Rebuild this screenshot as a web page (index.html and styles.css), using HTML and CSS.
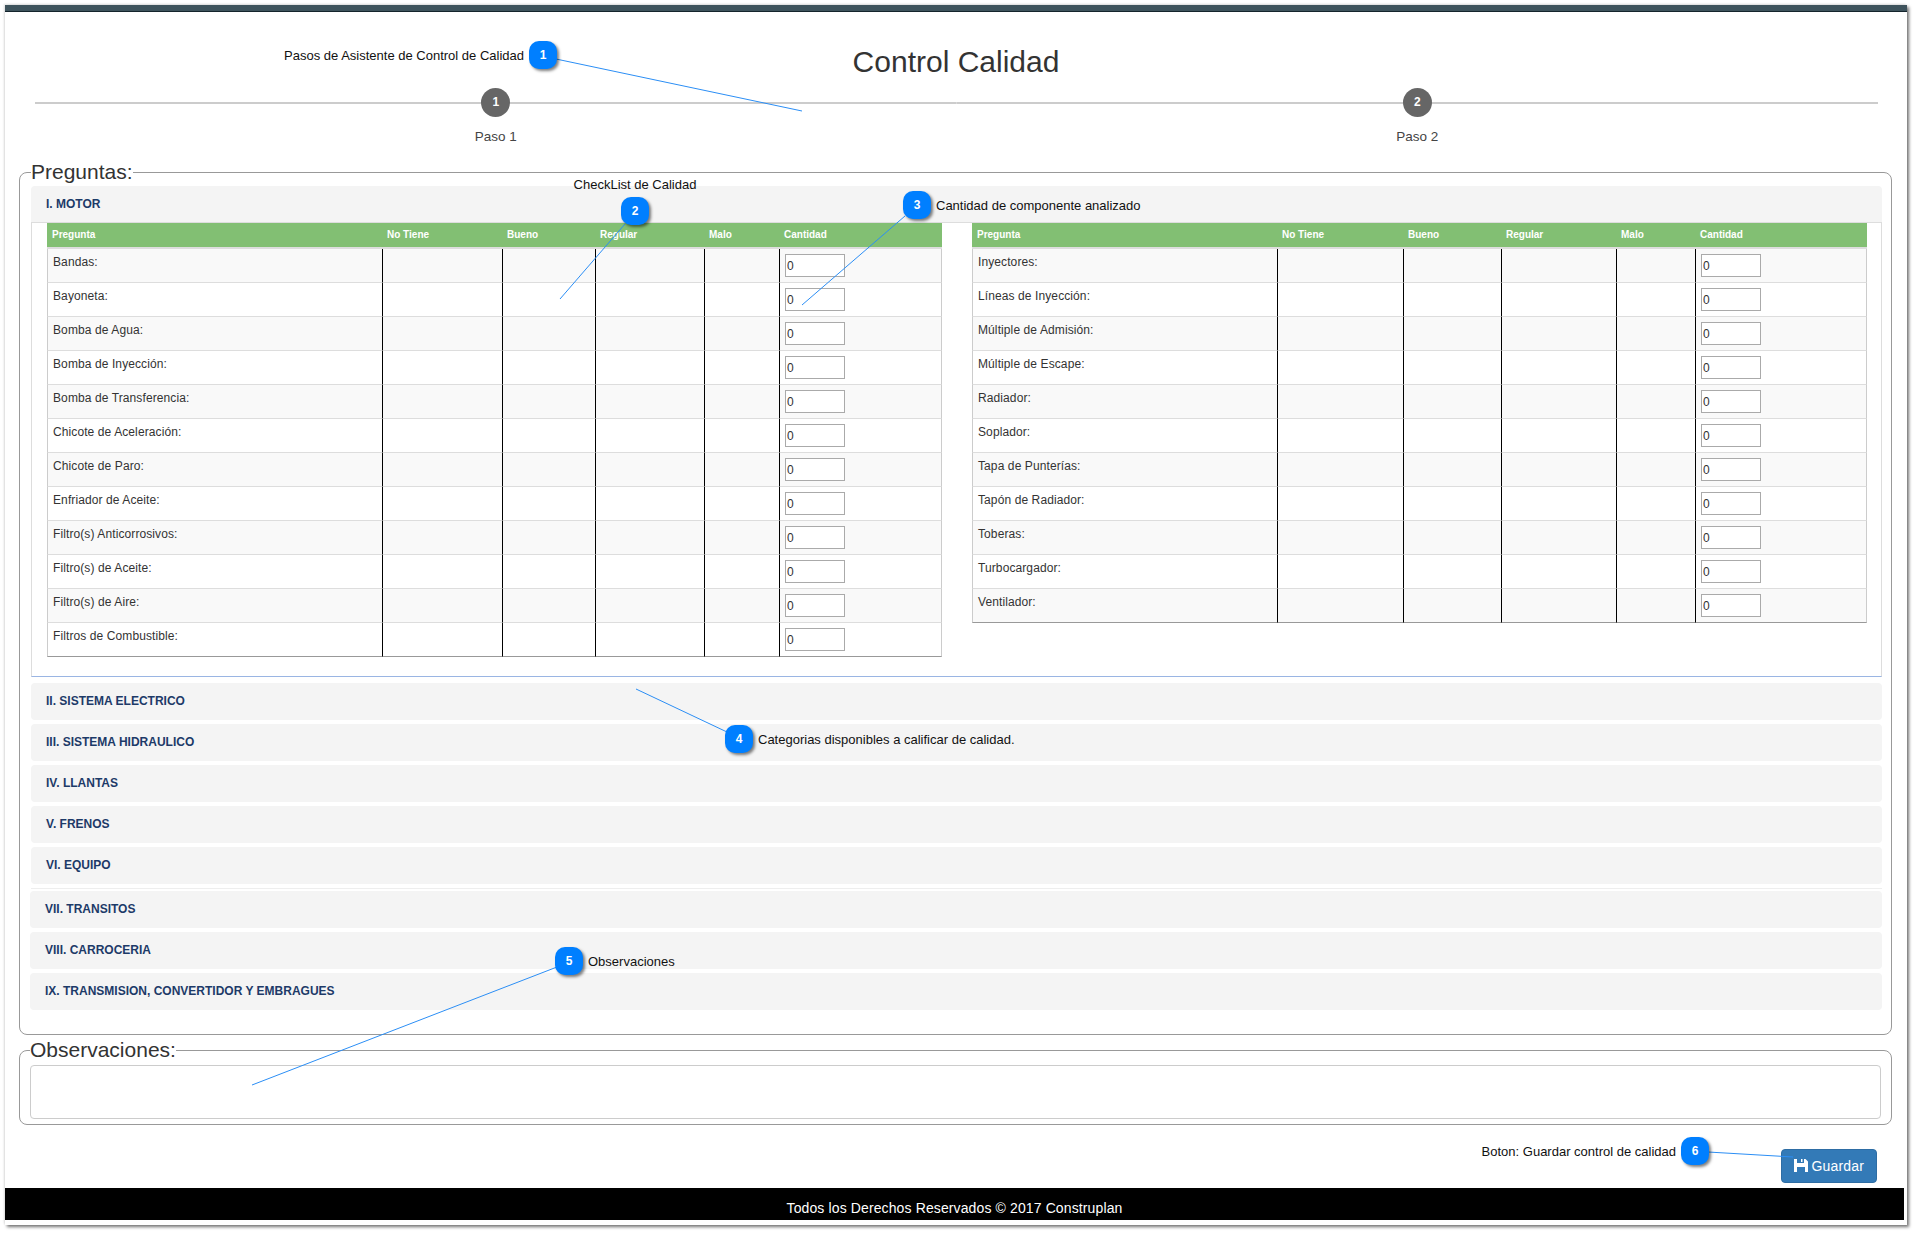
FILE: index.html
```html
<!DOCTYPE html>
<html lang="es">
<head>
    <meta charset="UTF-8">
    <meta name="viewport" content="width=device-width, initial-scale=1.0">
    <title>Control Calidad</title>
    <link rel="stylesheet" href="styles.css">
</head>
<body>

<div class="window">
    <div class="top-bar"></div>

    <h1 class="page-title">Control Calidad</h1>

    <!-- Wizard steps -->
    <div class="steps">
        <div class="step-track"><span class="step-circle">1</span></div>
        <div class="step-track"><span class="step-circle">2</span></div>
        <div class="step-label">Paso 1</div>
        <div class="step-label">Paso 2</div>
    </div>

    <fieldset class="group">
        <legend>Preguntas:</legend>

        <div class="accordion first-group">
            <div class="acc-title open">I. MOTOR</div>
            <div class="acc-panel">
                <table class="check left-table">
                    <colgroup>
                        <col class="l1"><col class="l2"><col class="l3"><col class="l4"><col class="l5"><col class="l6">
                    </colgroup>
                    <thead>
                        <tr><th>Pregunta</th><th>No Tiene</th><th>Bueno</th><th>Regular</th><th>Malo</th><th>Cantidad</th></tr>
                    </thead>
                    <tbody>
                        <tr><td>Bandas:</td><td></td><td></td><td></td><td></td><td><input class="qty" value="0"></td></tr>
                        <tr><td>Bayoneta:</td><td></td><td></td><td></td><td></td><td><input class="qty" value="0"></td></tr>
                        <tr><td>Bomba de Agua:</td><td></td><td></td><td></td><td></td><td><input class="qty" value="0"></td></tr>
                        <tr><td>Bomba de Inyección:</td><td></td><td></td><td></td><td></td><td><input class="qty" value="0"></td></tr>
                        <tr><td>Bomba de Transferencia:</td><td></td><td></td><td></td><td></td><td><input class="qty" value="0"></td></tr>
                        <tr><td>Chicote de Aceleración:</td><td></td><td></td><td></td><td></td><td><input class="qty" value="0"></td></tr>
                        <tr><td>Chicote de Paro:</td><td></td><td></td><td></td><td></td><td><input class="qty" value="0"></td></tr>
                        <tr><td>Enfriador de Aceite:</td><td></td><td></td><td></td><td></td><td><input class="qty" value="0"></td></tr>
                        <tr><td>Filtro(s) Anticorrosivos:</td><td></td><td></td><td></td><td></td><td><input class="qty" value="0"></td></tr>
                        <tr><td>Filtro(s) de Aceite:</td><td></td><td></td><td></td><td></td><td><input class="qty" value="0"></td></tr>
                        <tr><td>Filtro(s) de Aire:</td><td></td><td></td><td></td><td></td><td><input class="qty" value="0"></td></tr>
                        <tr><td>Filtros de Combustible:</td><td></td><td></td><td></td><td></td><td><input class="qty" value="0"></td></tr>
                    </tbody>
                </table>

                <table class="check right-table">
                    <colgroup>
                        <col class="r1"><col class="r2"><col class="r3"><col class="r4"><col class="r5"><col class="r6">
                    </colgroup>
                    <thead>
                        <tr><th>Pregunta</th><th>No Tiene</th><th>Bueno</th><th>Regular</th><th>Malo</th><th>Cantidad</th></tr>
                    </thead>
                    <tbody>
                        <tr><td>Inyectores:</td><td></td><td></td><td></td><td></td><td><input class="qty" value="0"></td></tr>
                        <tr><td>Líneas de Inyección:</td><td></td><td></td><td></td><td></td><td><input class="qty" value="0"></td></tr>
                        <tr><td>Múltiple de Admisión:</td><td></td><td></td><td></td><td></td><td><input class="qty" value="0"></td></tr>
                        <tr><td>Múltiple de Escape:</td><td></td><td></td><td></td><td></td><td><input class="qty" value="0"></td></tr>
                        <tr><td>Radiador:</td><td></td><td></td><td></td><td></td><td><input class="qty" value="0"></td></tr>
                        <tr><td>Soplador:</td><td></td><td></td><td></td><td></td><td><input class="qty" value="0"></td></tr>
                        <tr><td>Tapa de Punterías:</td><td></td><td></td><td></td><td></td><td><input class="qty" value="0"></td></tr>
                        <tr><td>Tapón de Radiador:</td><td></td><td></td><td></td><td></td><td><input class="qty" value="0"></td></tr>
                        <tr><td>Toberas:</td><td></td><td></td><td></td><td></td><td><input class="qty" value="0"></td></tr>
                        <tr><td>Turbocargador:</td><td></td><td></td><td></td><td></td><td><input class="qty" value="0"></td></tr>
                        <tr><td>Ventilador:</td><td></td><td></td><td></td><td></td><td><input class="qty" value="0"></td></tr>
                    </tbody>
                </table>
            </div>
            <div class="acc-title">II. SISTEMA ELECTRICO</div>
            <div class="acc-title">III. SISTEMA HIDRAULICO</div>
            <div class="acc-title">IV. LLANTAS</div>
            <div class="acc-title">V. FRENOS</div>
            <div class="acc-title">VI. EQUIPO</div>
        </div>

        <div class="accordion second-group">
            <div class="acc-title">VII. TRANSITOS</div>
            <div class="acc-title">VIII. CARROCERIA</div>
            <div class="acc-title">IX. TRANSMISION, CONVERTIDOR Y EMBRAGUES</div>
        </div>
    </fieldset>

    <fieldset class="group notes">
        <legend>Observaciones:</legend>
        <textarea class="notes-box"></textarea>
    </fieldset>

    <div class="actions">
        <button class="btn-save">
            <svg class="save-icon" viewBox="0 0 14 14" width="14" height="14">
                <path fill="#fff" fill-rule="evenodd" d="M0 1h11.5L14 3.5V14H0zM3 1v4h7V1H8.5v3H7V1zM3 9v5h8V9z"/>
            </svg>
            Guardar
        </button>
    </div>

    <div class="footer">Todos los Derechos Reservados © 2017 Construplan</div>
</div>

<!-- Callouts drawn over the page -->
<svg class="leaders" width="1916" height="1234" viewBox="0 0 1916 1234">
    <line x1="556" y1="59" x2="802" y2="111"/>
    <line x1="625" y1="224" x2="560" y2="299"/>
    <line x1="905" y1="216" x2="802" y2="305"/>
    <line x1="727" y1="732" x2="636" y2="689"/>
    <line x1="557" y1="967" x2="252" y2="1085"/>
    <line x1="1708" y1="1152" x2="1793" y2="1157"/>
</svg>

<div class="note note-1"><span>Pasos de Asistente de Control de Calidad</span><b class="badge">1</b></div>
<div class="note note-2"><span>CheckList de Calidad</span><b class="badge">2</b></div>
<div class="note note-3"><b class="badge">3</b><span>Cantidad de componente analizado</span></div>
<div class="note note-4"><b class="badge">4</b><span>Categorias disponibles a calificar de calidad.</span></div>
<div class="note note-5"><b class="badge">5</b><span>Observaciones</span></div>
<div class="note note-6"><span>Boton: Guardar control de calidad</span><b class="badge">6</b></div>

</body>
</html>
```

FILE: styles.css
```css
* {
    box-sizing: border-box;
}

html, body {
    margin: 0;
    background-color: #fff;
}

body {
    padding: 5px 9px 9px 5px;
    font-family: "Liberation Sans", Arial, sans-serif;
    font-size: 12px;
    color: #333;
}

.window {
    width: 1902px;
    padding-bottom: 5px;
    background-color: #fff;
    box-shadow: 2px 2px 3px rgba(0, 0, 0, 0.55), -1px -1px 2px rgba(0, 0, 0, 0.12);
}

.top-bar {
    height: 7px;
    background-color: #3e535c;
    border-bottom: 1px solid #14242c;
}

.page-title {
    margin: 33px 0 0;
    font-size: 30px;
    font-weight: 400;
    line-height: 33px;
    text-align: center;
}

/* Wizard */
.steps {
    display: grid;
    grid-template-columns: 1fr 1fr;
    margin: 10px 29px 0 30px;
    text-align: center;
}

.step-track {
    height: 29px;
    background: linear-gradient(#ccc, #ccc) center / 100% 2px no-repeat;
}

.step-circle {
    display: inline-block;
    width: 29px;
    height: 29px;
    border-radius: 50%;
    background-color: #666;
    color: #fff;
    font-weight: 700;
    line-height: 29px;
}

.step-label {
    margin-top: 10px;
    font-size: 13.5px;
    line-height: 20px;
    color: #444;
}

/* Fieldsets */
.group {
    margin: 13px 15px 0 14px;
    padding: 2px 9px 24px 11px;
    border: 1px solid #999;
    border-radius: 8px;
    min-width: 0;
}

.group legend {
    padding: 0;
    font-size: 21px;
    line-height: 24px;
}

.notes {
    margin-top: 3px;
    padding: 3px 10px 5px;
}

.notes-box {
    display: block;
    width: 100%;
    height: 54px;
    border: 1px solid #ccc;
    border-radius: 4px;
    resize: none;
}

/* Accordion */
.first-group {
    padding-bottom: 4px;
    border-bottom: 1px solid #eee;
}

.second-group {
    margin: 2px 0 0 -1px;
}

.acc-title {
    height: 37px;
    margin-bottom: 4px;
    padding-left: 15px;
    background-color: #f4f4f4;
    border-radius: 4px;
    color: #1d3a68;
    font-weight: 700;
    line-height: 36px;
}

.first-group .acc-title:last-child,
.second-group .acc-title:last-child {
    margin-bottom: 0;
}

.acc-title.open {
    margin-bottom: 0;
    border-bottom: 1px solid #ddd;
    border-radius: 4px 4px 0 0;
}

.acc-panel {
    display: flex;
    gap: 30px;
    height: 454px;
    margin-bottom: 6px;
    padding: 0 14px 0 15px;
    border: 1px solid #ddd;
    border-top: 0;
    border-bottom-color: #9ab5e3;
    align-items: flex-start;
}

/* Checklist tables */
.check {
    width: 895px;
    border-collapse: separate;
    border-spacing: 0;
    table-layout: fixed;
    background-color: #fff;
}

.l1 { width: 335px; }
.l2 { width: 120px; }
.l3 { width: 93px; }
.l4 { width: 109px; }
.l5 { width: 75px; }
.l6 { width: 163px; }

.r1 { width: 305px; }
.r2 { width: 126px; }
.r3 { width: 98px; }
.r4 { width: 115px; }
.r5 { width: 79px; }
.r6 { width: 172px; }

.check th {
    height: 26px;
    padding: 0 4px 2px 5px;
    background-color: #82bf73;
    border-bottom: 2px solid #ddd;
    color: #fff;
    font-size: 10px;
    font-weight: 700;
    text-align: left;
}

.check td {
    height: 34px;
    padding: 5px 0 0 5px;
    border-bottom: 1px solid #ddd;
    border-left: 1px solid #000;
    letter-spacing: 0.1px;
    line-height: 17px;
    vertical-align: top;
}

.check td:first-child {
    border-left-color: #ccc;
}

.check td:last-child {
    border-right: 1px solid #ccc;
}

.check tbody tr:nth-child(odd) td {
    background-color: #f9f9f9;
}

.check tbody tr:last-child td {
    border-bottom: 1px solid #999;
}

.qty {
    display: block;
    width: 60px;
    height: 23px;
    padding: 0 1px;
    border: 1px solid #aaa;
    background-color: #fff;
    font-family: inherit;
    font-size: 12px;
    color: #333;
}

/* Save button */
.actions {
    display: flex;
    justify-content: flex-end;
    margin: 24px 30px 5px 0;
}

.btn-save {
    display: flex;
    align-items: center;
    gap: 4px;
    height: 34px;
    padding: 0 12px;
    border: 1px solid #2e6da4;
    border-radius: 4px;
    background-color: #337ab7;
    color: #fff;
    font-family: inherit;
    font-size: 14px;
    letter-spacing: 0.15px;
}

.save-icon {
    margin-bottom: 3px;
}

.footer {
    width: 1899px;
    height: 32px;
    padding-top: 4px;
    background-color: #000;
    color: #fff;
    font-size: 14px;
    letter-spacing: 0.12px;
    line-height: 32px;
    text-align: center;
    overflow: hidden;
}

/* Callouts */
.leaders {
    position: absolute;
    top: 0;
    left: 0;
    pointer-events: none;
}

.leaders line {
    stroke: #2b8ef5;
    stroke-width: 1;
}

.note {
    position: absolute;
    display: flex;
    align-items: center;
    gap: 5px;
    color: #111;
    font-size: 13px;
    line-height: 17px;
}

.note span {
    padding-top: 1px;
}

.badge {
    flex: none;
    width: 28px;
    height: 28px;
    border-radius: 10px;
    background-color: #007fff;
    box-shadow: 2px 2px 3px rgba(0, 0, 0, 0.5);
    color: #fff;
    font-size: 12px;
    line-height: 28px;
    text-align: center;
}

.note-1 { top: 41px; right: 1359px; }
.note-2 { top: 175px; left: 535px; width: 200px; flex-direction: column; gap: 4px; }
.note-3 { top: 191px; left: 903px; }
.note-4 { top: 725px; left: 725px; }
.note-5 { top: 947px; left: 555px; }
.note-6 { top: 1137px; right: 207px; }
```
